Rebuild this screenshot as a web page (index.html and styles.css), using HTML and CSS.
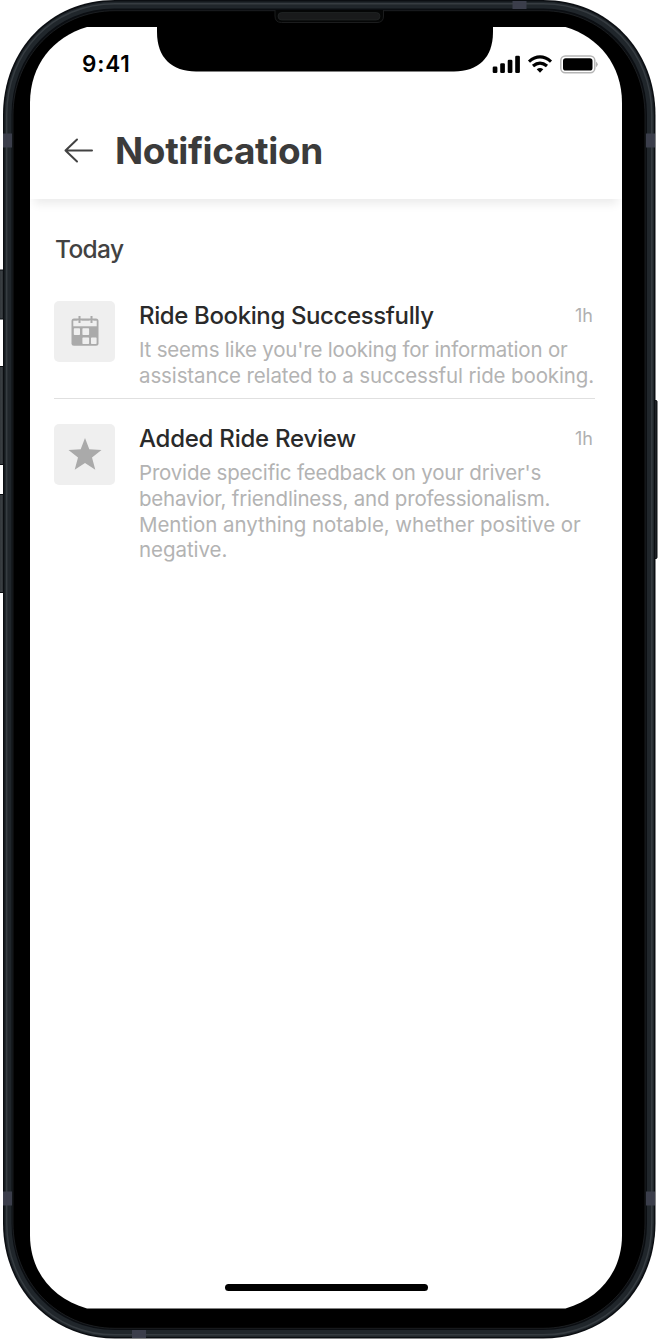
FILE: index.html
```html
<!DOCTYPE html>
<html lang="en">
<head>
<meta charset="utf-8">
<title>Notification</title>
<link rel="stylesheet" href="styles.css">
</head>
<body>
<div class="phone">
  <svg class="phone-frame" width="658" height="1340" viewBox="0 0 658 1340" aria-hidden="true">
    <defs>
      <linearGradient id="btn" x1="0" x2="1" y1="0" y2="0"><stop offset="0" stop-color="#24292e"/><stop offset=".6" stop-color="#3a3f43"/><stop offset="1" stop-color="#111417"/></linearGradient>
    </defs>
    <g fill="url(#btn)" stroke="#0b0e12">
      <rect x="-3" y="270" width="8" height="49" rx="1"/>
      <rect x="-3" y="366.500" width="8" height="98" rx="1"/>
      <rect x="-3" y="494.500" width="8" height="98" rx="1"/>
      <rect x="652" y="400.500" width="5" height="158" rx="1"/>
    </g>
    <path fill="#0b0e12" d="M3 115C3 50 50 0 115 0H543C608 0 655.500 50 655.500 115V1223C655.500 1288 608 1338.500 543 1338.500H115C50 1338.500 3 1288 3 1223Z"/>
    <g fill="none">
      <path stroke="#20262b" stroke-width="7" d="M8 115C8 53 53 5 115 5H543C605 5 650.500 53 650.500 115V1223C650.500 1285 605 1333.500 543 1333.500H115C53 1333.500 8 1285 8 1223Z"/>
      <path stroke="#363c41" stroke-width="1.500" d="M6.700 115C6.700 52 52 3.700 115 3.700H543C606 3.700 651.800 52 651.800 115V1223C651.800 1286 606 1334.800 543 1334.800H115C52 1334.800 6.700 1286 6.700 1223Z"/>
    </g>
    <g fill="#3b3e4b">
      <rect x="3" y="133.500" width="9" height="14"/>
      <rect x="646" y="133.500" width="9" height="14"/>
      <rect x="3" y="1191.500" width="9" height="14"/>
      <rect x="646" y="1191.500" width="9" height="14"/>
      <rect x="512.500" y="1" width="14" height="8"/>
      <rect x="132" y="1330" width="14" height="8"/>
    </g>
    <path fill="#000" stroke="#24272a" stroke-width=".7" d="M13 115C13 57 57 10.700 115 10.700H543C601 10.700 645 57 645 115V1223C645 1281 601 1328.300 543 1328.300H115C57 1328.300 13 1281 13 1223Z"/>
    <path fill="#050606" stroke="#1b1c1d" d="M275 10V16Q275 22.500 281.500 22.500H377Q383.500 22.500 383.500 16V10"/>
    <rect x="278" y="12.500" width="102" height="7.500" rx="3.700" fill="#191a1b" stroke="#292b2c" stroke-width=".6"/>
    <path fill="#fff" d="M30 103C30 65 53 37 87 27H565.500C599 37 622 65 622 103V1235C622 1272 599 1299 565.500 1308.500H87C53 1299 30 1272 30 1235Z"/>
    <path fill="#000" d="M157 26V32C157 58 172 71.500 196 71.500H454C478 71.500 493 58 493 32V26Z"/>
  </svg>

  <div class="screen">
    <div class="status-bar">
      <span class="clock">9:41</span>
      <svg class="status-icons" width="108" height="22" viewBox="0 0 108 22" aria-hidden="true">
        <rect x="2.700" y="13.500" width="4.700" height="6.500" rx="1.300"/>
        <rect x="10.200" y="10.300" width="4.700" height="9.700" rx="1.300"/>
        <rect x="17.700" y="6.700" width="4.700" height="13.300" rx="1.300"/>
        <rect x="25.200" y="2.700" width="4.700" height="17.300" rx="1.300"/>
        <g fill="none" stroke="#000" stroke-width="3.200">
          <path d="M39 8.600Q50 -.700 61 8.600"/>
          <path d="M43 13Q50 7.100 57 13"/>
        </g>
        <path d="M46.700 16.200Q50 13.600 53.300 16.200L50 19.800Z"/>
        <rect x="70.800" y="3" width="34" height="16.700" rx="4.500" fill="none" stroke="#b5b5b5" stroke-width="1.500"/>
        <rect x="73" y="5.300" width="29.500" height="12.300" rx="2.700"/>
        <path fill="#b5b5b5" d="M106 8.500Q109.500 11.300 106 14.200Z"/>
      </svg>
    </div>
    <header class="header">
      <svg class="back" width="30" height="26" viewBox="0 0 30 26" fill="none" stroke="#424242" stroke-width="2" stroke-linecap="round" stroke-linejoin="round" aria-label="Back"><path d="M28 12.500H1.500M13 1.500L1.500 12.500L13 23.500"/></svg>
      <h1 class="title">Notification</h1>
    </header>
    <main class="content">
      <h2 class="day">Today</h2>
      <article class="notice notice-divided">
        <div class="tile">
          <svg width="28" height="30" viewBox="0 0 28 30" aria-hidden="true">
            <rect x=".500" y="2.500" width="27" height="27.200" rx="2.500" fill="#aaa"/>
            <rect x="2.300" y="4.700" width="23.400" height="5.600" fill="#efefef"/>
            <path stroke="#efefef" stroke-width="4" d="M8.500 4.500V7.500M20.500 4.500V7.500"/>
            <path stroke="#aaa" stroke-width="2" d="M8.500 0V7M20.500 0V7"/>
            <g fill="#efefef"><rect x="2.800" y="12.300" width="6.200" height="6.700" rx=".7"/><rect x="11.400" y="12.300" width="6.700" height="6.700" rx=".7"/><rect x="11.400" y="21.400" width="6.700" height="6.500" rx=".7"/><rect x="20" y="21.400" width="5.600" height="6.500" rx=".7"/></g>
          </svg>
        </div>
        <div class="notice-body">
          <div class="notice-head"><h3 class="notice-title notice-title-long">Ride Booking Successfully</h3><time class="age">1h</time></div>
          <p class="message"><span class="tight">It seems like you're looking for information or</span><br>assistance related to a successful ride booking.</p>
        </div>
      </article>
      <article class="notice">
        <div class="tile">
          <svg width="34" height="34" viewBox="0 0 34 34" aria-hidden="true"><path fill="#aaa" d="M17 1L21.300 12.300L33.500 13L24 20.500L27.300 32.700L17 25.900L6.700 32.700L10 20.500L.500 13L12.700 12.300Z"/></svg>
        </div>
        <div class="notice-body">
          <div class="notice-head"><h3 class="notice-title">Added Ride Review</h3><time class="age">1h</time></div>
          <p class="message"><span class="tight">Provide specific feedback on your driver's<br>behavior, friendliness, and professionalism.</span><br><span class="loose">Mention anything notable, whether positive or<br>negative.</span></p>
        </div>
      </article>
    </main>
    <div class="home-indicator"></div>
  </div>
</div>
</body>
</html>
```
FILE: styles.css
```css
* { box-sizing: border-box; }
body { margin: 0; background: #fff; font-family: Inter, "Liberation Sans", sans-serif; }
h1, h2, h3, p { margin: 0; }
.phone { position: relative; width: 658px; height: 1340px; overflow: hidden; padding: 27px 36px 31px 30px; }
.phone-frame { position: absolute; inset: 0; z-index: -1; }
.screen { height: 100%; display: flex; flex-direction: column; }
.status-bar { display: flex; justify-content: space-between; align-items: center; height: 74px; padding: 0 24px 0 52px; }
.clock { font-size: 22.5px; line-height: 28px; font-weight: 600; letter-spacing: .8px; color: #000; }
.status-icons { display: block; }
.header { display: flex; align-items: center; gap: 21px; height: 98px; padding: 1px 34px 0 34px; box-shadow: 0 9px 9px -4px rgba(0, 0, 0, .08); }
.title { font-size: 37px; line-height: 46px; font-weight: 700; letter-spacing: -.38px; color: #3b3b3b; }
.content { flex: 1; padding: 34px 27px 0 24px; }
.day { font-size: 24.5px; line-height: 32px; font-weight: 500; letter-spacing: -.65px; color: #424242; margin-bottom: 35.5px; padding-left: 1px; }
.notice { display: flex; gap: 24px; width: 541px; padding-bottom: 9px; }
.notice-divided { border-bottom: 1px solid #e0e0e0; margin-bottom: 25px; }
.tile { width: 61px; height: 61px; border-radius: 5px; background: #efefef; display: grid; place-items: center; flex: none; }
.notice-body { flex: 1; min-width: 0; }
.notice-head { display: flex; justify-content: space-between; align-items: center; height: 30px; margin-bottom: 6.5px; }
.notice-title { font-size: 24px; line-height: 30px; font-weight: 500; letter-spacing: -.25px; color: #2a2a2a; white-space: nowrap; }
.notice-title-long { letter-spacing: -.38px; }
.age { font-size: 18px; color: #b0b0b0; margin-right: 2px; }
.message { font-size: 20.5px; line-height: 25.8px; letter-spacing: -.12px; color: #b3b3b3; white-space: nowrap; }
.tight { letter-spacing: -.19px; }
.loose { letter-spacing: -.05px; }
.home-indicator { align-self: center; width: 203px; height: 7px; border-radius: 4px; background: #000; margin-bottom: 18px; }
```
